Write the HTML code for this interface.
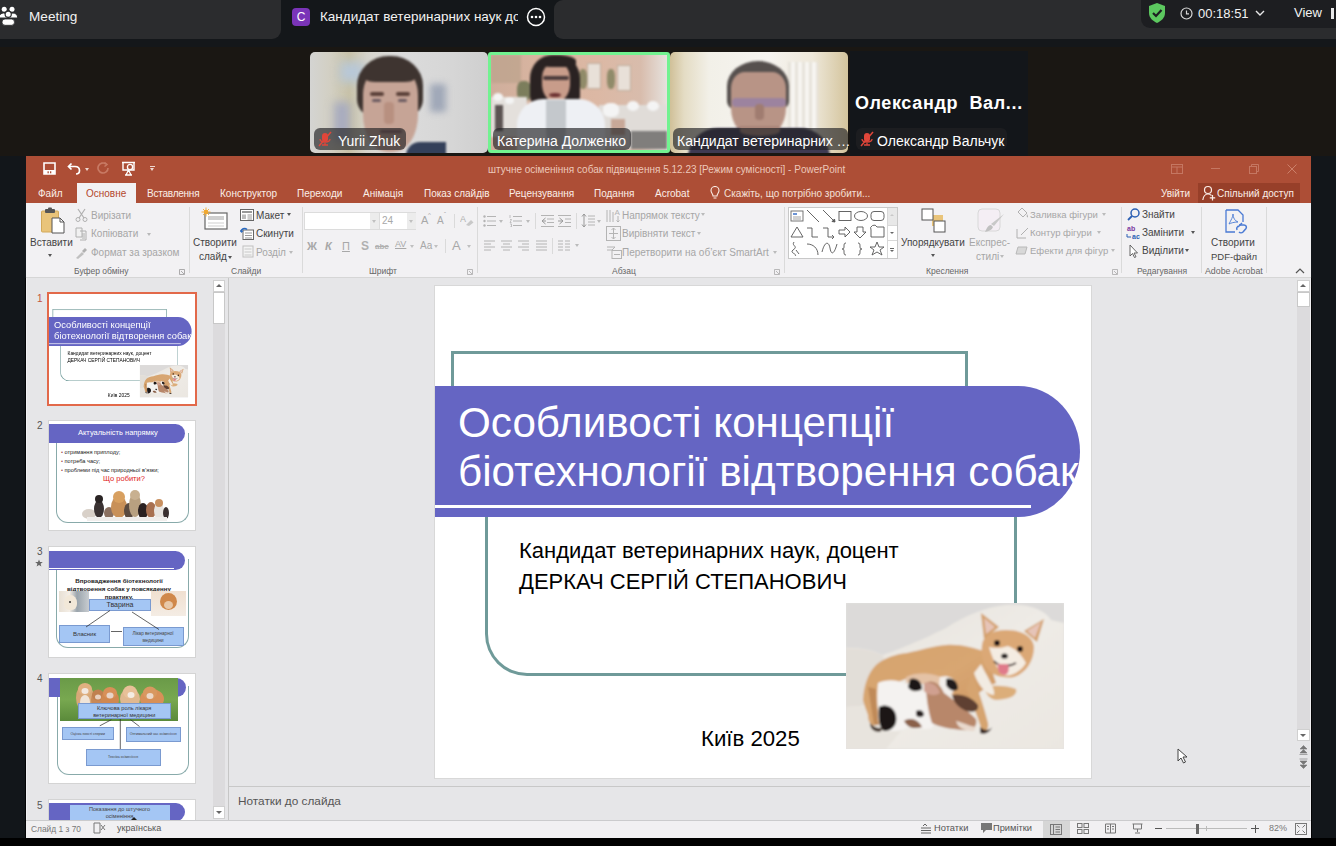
<!DOCTYPE html>
<html><head><meta charset="utf-8">
<style>
*{margin:0;padding:0;box-sizing:border-box}
html,body{width:1336px;height:846px;overflow:hidden;background:#000;font-family:"Liberation Sans",sans-serif;position:relative}
.a{position:absolute}
.t{position:absolute;white-space:nowrap;line-height:1}
/* ZOOM HEADER */
#topbar{left:0;top:0;width:1336px;height:47px;background:#14171a}
#tabMeeting{left:0;top:0;width:281px;height:39px;background:#2b2c2e;border-bottom-right-radius:9px}
#tabRight{left:554px;top:0;width:782px;height:39px;background:#2b2c2e;border-bottom-left-radius:9px;border-top-left-radius:9px}
#pill{left:1141px;top:0;width:195px;height:28px;background:#1d1e21;border-bottom-left-radius:9px}
#videostrip{left:0;top:47px;width:1336px;height:109px;background:#1a1713}
.tile{position:absolute;top:52px;height:101px;overflow:hidden;border-radius:5px}
.np{position:absolute;top:128px;height:22px;background:rgba(34,34,36,.66);border-radius:6px;color:#fff;font-size:14px;line-height:22px;white-space:nowrap}
#leftdark{left:0;top:156px;width:26px;height:682px;background:#12161a}
#rightdark{left:1311px;top:156px;width:25px;height:682px;background:#12161a}
/* PPT */
#ppt{left:26px;top:156px;width:1285px;height:682px;background:#e6e6e8;overflow:hidden}
</style></head><body>
<!-- ZOOM TOP -->
<div id="topbar" class="a"></div>
<div id="tabMeeting" class="a"></div>
<div id="tabRight" class="a"></div>
<div id="pill" class="a"></div>
<!-- people icon -->
<svg class="a" style="left:0;top:0" width="20" height="28" viewBox="0 0 20 28">
  <circle cx="4.2" cy="9.2" r="2.5" fill="#fff"/><circle cx="12" cy="9.2" r="2.5" fill="#fff"/>
  <path d="M-1.5 18 C-1 14.5 1.5 13 3.5 13 C6 13 8 14.5 8.5 18 Z" fill="#fff" stroke="#2b2c2e" stroke-width="1"/>
  <path d="M8 18 C8.5 14.5 10.5 13 13 13 C15.5 13 17.5 14.5 17.8 18 Z" fill="#fff" stroke="#2b2c2e" stroke-width="1"/>
  <circle cx="8.2" cy="14.2" r="3.1" fill="#fff" stroke="#2b2c2e" stroke-width="1.2"/>
  <rect x="2" y="19" width="12.5" height="6.3" rx="3.1" fill="#fff" stroke="#2b2c2e" stroke-width="0.8"/>
</svg>
<div class="t" style="left:29px;top:10px;font-size:13.6px;color:#f2f2f2">Meeting</div>
<div class="a" style="left:292px;top:8px;width:18px;height:18px;background:#7a34b8;border-radius:4px;color:#fff;font-size:12px;line-height:18px;text-align:center">C</div>
<div class="a" style="left:320px;top:9px;width:198px;height:18px;overflow:hidden"><div class="t" style="left:0;top:1px;font-size:13.5px;color:#f2f2f2">Кандидат ветеринарних наук доцент</div></div>
<svg class="a" style="left:526px;top:7px" width="20" height="20" viewBox="0 0 20 20"><circle cx="10" cy="10" r="8.5" fill="none" stroke="#fff" stroke-width="1.5"/><circle cx="6" cy="10" r="1.3" fill="#fff"/><circle cx="10" cy="10" r="1.3" fill="#fff"/><circle cx="14" cy="10" r="1.3" fill="#fff"/></svg>
<!-- shield -->
<svg class="a" style="left:1147px;top:2px" width="20" height="22" viewBox="0 0 20 22"><path d="M10 1 L18 4 L18 11 C18 16 14 19 10 21 C6 19 2 16 2 11 L2 4 Z" fill="#5cc85f"/><path d="M6 11 L9 14 L14.5 8" fill="none" stroke="#1d1e21" stroke-width="2.2"/></svg>
<svg class="a" style="left:1180px;top:7px" width="13" height="13" viewBox="0 0 13 13"><circle cx="6.5" cy="6.5" r="5.5" fill="none" stroke="#d8d8d8" stroke-width="1.2"/><path d="M6.5 3.5 V6.8 H9" fill="none" stroke="#d8d8d8" stroke-width="1.2"/></svg>
<div class="t" style="left:1198px;top:7px;font-size:13px;color:#f2f2f2">00:18:51</div>
<svg class="a" style="left:1255px;top:10px" width="10" height="7" viewBox="0 0 10 7"><path d="M1 1 L5 5 L9 1" fill="none" stroke="#e8e8e8" stroke-width="1.4"/></svg>
<div class="t" style="left:1294px;top:6px;font-size:13px;color:#f2f2f2">View</div>
<div class="a" style="left:1331px;top:8px;width:5px;height:11px;border-left:3px solid #e8e8e8"></div>

<div id="videostrip" class="a"></div>
<!-- tile 1 -->
<div class="tile" style="left:310px;width:178px;background:linear-gradient(90deg,#d4d4d2 0%,#d2cfc2 12%,#c8c2a8 22%,#d6d4cc 32%,#dcdcdc 50%,#d6d6d6 80%,#cfcfcf 100%)">
  <div class="a" style="left:0;top:0;width:178px;height:101px;filter:blur(1.2px)">
  <div class="a" style="left:24px;top:50px;width:16px;height:40px;background:#a8acc0;filter:blur(4px)"></div>
  <div class="a" style="left:30px;top:10px;width:24px;height:20px;background:#b8c8d8;filter:blur(5px)"></div>
  <div class="a" style="left:120px;top:32px;width:16px;height:28px;background:#a0a8b8;filter:blur(3px)"></div>
  <div class="a" style="left:47px;top:4px;width:66px;height:62px;background:#3e3430;border-radius:48% 48% 30% 30%"></div>
  <div class="a" style="left:53px;top:18px;width:55px;height:82px;background:#c6a496;border-radius:30% 30% 45% 45%"></div>
  <div class="a" style="left:56px;top:16px;width:48px;height:14px;background:#3e3430;border-radius:50% 50% 20% 20%"></div>
  <div class="a" style="left:60px;top:40px;width:14px;height:4px;background:#5a4038;border-radius:2px"></div>
  <div class="a" style="left:86px;top:40px;width:14px;height:4px;background:#5a4038;border-radius:2px"></div>
  <div class="a" style="left:62px;top:47px;width:9px;height:3px;background:#6a5a60;border-radius:2px"></div>
  <div class="a" style="left:88px;top:47px;width:9px;height:3px;background:#6a5a60;border-radius:2px"></div>
  <div class="a" style="left:74px;top:50px;width:10px;height:22px;background:#b89080;border-radius:4px"></div>
  <div class="a" style="left:70px;top:78px;width:22px;height:3px;background:#8a6060;border-radius:2px"></div>
  <div class="a" style="left:96px;top:90px;width:40px;height:14px;background:#34405a;border-radius:14px 0 0 0"></div>
  </div>
</div>
<div class="np" style="left:314px;width:92px"><svg class="a" style="left:3px;top:3px" width="16" height="16" viewBox="0 0 16 16"><rect x="5" y="2" width="6" height="9" rx="3" fill="#e0463a"/><path d="M3 8 C3 12 13 12 13 8 M8 12 V14 M5 14 H11" fill="none" stroke="#e0463a" stroke-width="1.3"/><path d="M2 15 L14 1" stroke="#e0463a" stroke-width="1.5"/></svg><span class="t" style="left:24px;top:6px">Yurii Zhuk</span></div>
<!-- tile 2 -->
<div class="tile" style="left:488px;width:182px;border-radius:3px;border:3px solid #72f290;background:linear-gradient(90deg,#cfae9c 0%,#d8b4a0 25%,#dcb8a4 60%,#d8bcac 85%,#e6e2de 100%)">
  <div class="a" style="left:0;top:0;width:176px;height:95px;filter:blur(1.2px)">
  <div class="a" style="left:0;top:0;width:30px;height:28px;background:#b8a088;opacity:.6"></div>
  <div class="a" style="left:126px;top:10px;width:14px;height:26px;background:#e8e0d8;border:1px solid #c0b0a0"></div>
  <div class="a" style="left:96px;top:8px;width:14px;height:26px;background:#e8e0d8;border:1px solid #c0b0a0"></div>
  <div class="a" style="left:88px;top:14px;width:8px;height:20px;background:#707850;opacity:.7;border-radius:40%"></div>
  <div class="a" style="left:116px;top:14px;width:8px;height:20px;background:#707850;opacity:.7;border-radius:40%"></div>
  <div class="a" style="left:26px;top:26px;width:14px;height:20px;background:#405a30;opacity:.6;border-radius:40%"></div>
  <div class="a" style="left:0;top:42px;width:36px;height:40px;background:#e4e0dc"></div>
  <div class="a" style="left:2px;top:38px;width:10px;height:8px;background:#f4f4f4;border-radius:50%"></div>
  <div class="a" style="left:14px;top:42px;width:9px;height:7px;background:#f4f4f4;border-radius:50%"></div>
  <div class="a" style="left:4px;top:50px;width:8px;height:26px;background:#3a3030;opacity:.8"></div>
  <div class="a" style="left:108px;top:50px;width:68px;height:44px;background:#e0dcd8"></div>
  <div class="a" style="left:112px;top:48px;width:16px;height:14px;background:#f4f4f4;border-radius:40%"></div>
  <div class="a" style="left:136px;top:46px;width:12px;height:10px;background:#f4f4f4;border-radius:50%"></div>
  <div class="a" style="left:156px;top:46px;width:12px;height:10px;background:#f4f4f4;border-radius:50%"></div>
  <div class="a" style="left:120px;top:64px;width:14px;height:16px;background:#c8a898"></div>
  <div class="a" style="left:140px;top:76px;width:36px;height:18px;background:#404040;opacity:.6"></div>
  <div class="a" style="left:39px;top:0;width:50px;height:52px;background:#2a2222;border-radius:45% 45% 20% 20%"></div>
  <div class="a" style="left:51px;top:9px;width:28px;height:38px;background:#c89c8a;border-radius:35% 35% 48% 48%"></div>
  <div class="a" style="left:49px;top:0;width:36px;height:12px;background:#2a2222;border-radius:50% 50% 30% 30%"></div>
  <div class="a" style="left:52px;top:21px;width:26px;height:4px;background:#4a3a3a;border-radius:2px"></div>
  <div class="a" style="left:58px;top:38px;width:12px;height:4px;background:#6a3030;border-radius:50%"></div>
  <div class="a" style="left:26px;top:44px;width:88px;height:52px;background:#eef0f4;border-radius:26px 26px 0 0"></div>
  <div class="a" style="left:55px;top:45px;width:20px;height:50px;background:#c4c8cc;border-radius:0 0 40% 40%"></div>
  </div>
</div>
<div class="np" style="left:493px;width:138px"><span class="t" style="left:4px;top:6px">Катерина Долженко</span></div>
<!-- tile 3 -->
<div class="tile" style="left:670px;width:178px;background:linear-gradient(90deg,#d0c098 0%,#e4dcc4 8%,#f2f0e8 22%,#f6f4f0 55%,#eee8da 80%,#d4c49c 100%)">
  <div class="a" style="left:0;top:0;width:178px;height:101px;filter:blur(1.2px)">
  <div class="a" style="left:118px;top:10px;width:30px;height:70px;background:repeating-linear-gradient(90deg,#e6e2da 0 3px,#f8f6f2 3px 7px)"></div>
  <div class="a" style="left:57px;top:9px;width:62px;height:50px;background:#56504e;border-radius:50% 50% 20% 20%"></div>
  <div class="a" style="left:61px;top:20px;width:55px;height:66px;background:#b89486;border-radius:25% 25% 45% 45%"></div>
  <div class="a" style="left:62px;top:46px;width:54px;height:9px;background:#8878b0;border-radius:4px;opacity:.6"></div>
  <div class="a" style="left:85px;top:52px;width:9px;height:16px;background:#a07c70;border-radius:4px"></div>
  <div class="a" style="left:76px;top:74px;width:24px;height:3px;background:#705050;border-radius:2px"></div>
  <div class="a" style="left:18px;top:76px;width:142px;height:30px;background:#3e3a52;border-radius:34px 34px 0 0"></div>
  <div class="a" style="left:70px;top:74px;width:40px;height:10px;background:#a88478;border-radius:0 0 50% 50%"></div>
  </div>
</div>
<div class="np" style="left:673px;width:175px"><span class="t" style="left:4px;top:6px">Кандидат ветеринарних …</span></div>
<!-- tile 4 -->
<div class="tile" style="left:850px;width:178px;top:51px;height:105px;background:#13161a;border-radius:0">
  <div class="t" style="left:5px;top:43px;font-size:18px;font-weight:bold;color:#fff;letter-spacing:0.65px">Олександр&nbsp; Вал...</div>
</div>
<div class="np" style="left:856px;width:151px"><svg class="a" style="left:3px;top:3px" width="16" height="16" viewBox="0 0 16 16"><rect x="5" y="2" width="6" height="9" rx="3" fill="#e0463a"/><path d="M3 8 C3 12 13 12 13 8 M8 12 V14 M5 14 H11" fill="none" stroke="#e0463a" stroke-width="1.3"/><path d="M2 15 L14 1" stroke="#e0463a" stroke-width="1.5"/></svg><span class="t" style="left:21px;top:6px">Олександр Вальчук</span></div>

<div id="leftdark" class="a"></div>
<div id="rightdark" class="a"></div>
<div id="ppt" class="a"></div>
<div class="a" style="left:26px;top:156px;width:1285px;height:47px;background:#ad4e36"></div>
<!-- QAT -->
<svg class="a" style="left:43px;top:162px" width="13" height="13" viewBox="0 0 13 13"><path d="M1 1 H12 V12 H1 Z" fill="none" stroke="#fff" stroke-width="1.6"/><rect x="1" y="8" width="11" height="4" fill="#fff"/><rect x="4.5" y="9.3" width="1.3" height="2" fill="#ad4e36"/><rect x="7" y="9.3" width="1.3" height="2" fill="#ad4e36"/></svg>
<svg class="a" style="left:67px;top:162px" width="14" height="13" viewBox="0 0 14 13"><path d="M4.5 1.5 L1.5 4.5 L4.5 7.5 M1.5 4.5 H8 C11 4.5 12.5 6.5 12.5 8.5 C12.5 10.5 11 12 9 12" fill="none" stroke="#fff" stroke-width="1.7"/></svg>
<div class="a" style="left:85px;top:168px;border-left:2.5px solid transparent;border-right:2.5px solid transparent;border-top:3px solid #f0d8d0"></div>
<svg class="a" style="left:97px;top:162px" width="13" height="13" viewBox="0 0 13 13"><path d="M9 2 A5 5 0 1 0 11 6" fill="none" stroke="#c87a64" stroke-width="1.7"/><path d="M7.5 0.5 L10 2.5 L7.5 4.5" fill="none" stroke="#c87a64" stroke-width="1.5"/></svg>
<svg class="a" style="left:121px;top:161px" width="15" height="15" viewBox="0 0 15 15"><path d="M1 1.5 H14 M2 1.5 V9 H13 V1.5" fill="none" stroke="#fff" stroke-width="1.4"/><circle cx="9" cy="6" r="2.6" fill="none" stroke="#fff" stroke-width="1.3"/><path d="M7.5 9 L5 14 M7.5 9 L10 14 M4 14 H11" fill="none" stroke="#fff" stroke-width="1.3"/></svg>
<div class="a" style="left:150px;top:166px;width:5px;height:1px;background:#f0d8d0"></div>
<div class="a" style="left:150px;top:168px;border-left:2.5px solid transparent;border-right:2.5px solid transparent;border-top:3px solid #f0d8d0"></div>
<div class="t" style="left:488px;top:165px;font-size:10px;color:#ecc8ba">штучне осіменіння собак підвищення 5.12.23 [Режим сумісності] - PowerPoint</div>
<!-- window controls -->
<svg class="a" style="left:1171px;top:164px" width="12" height="10" viewBox="0 0 12 10"><rect x="0.5" y="0.5" width="11" height="9" fill="none" stroke="#c57762" stroke-width="1"/><path d="M0.5 3 H11.5 M6 3 V9.5" stroke="#c57762" stroke-width="1"/></svg>
<div class="a" style="left:1211px;top:168px;width:9px;height:1px;background:#c57762"></div>
<svg class="a" style="left:1249px;top:164px" width="10" height="10" viewBox="0 0 10 10"><rect x="0.5" y="2.5" width="7" height="7" fill="none" stroke="#c57762"/><path d="M2.5 2.5 V0.5 H9.5 V7.5 H7.5" fill="none" stroke="#c57762"/></svg>
<svg class="a" style="left:1287px;top:164px" width="10" height="10" viewBox="0 0 10 10"><path d="M0.5 0.5 L9.5 9.5 M9.5 0.5 L0.5 9.5" stroke="#cc806a" stroke-width="1"/></svg>
<!-- tabs -->
<div class="a" style="left:77px;top:183px;width:59px;height:21px;background:#f2f1f3"></div>
<div class="t" style="left:38px;top:189px;font-size:10px;color:#fbeee8">Файл</div>
<div class="t" style="left:86px;top:189px;font-size:10px;color:#b4472c">Основне</div>
<div class="t" style="left:147px;top:189px;font-size:10px;letter-spacing:-0.23px;color:#fbeee8">Вставлення</div>
<div class="t" style="left:220px;top:189px;font-size:10px;color:#fbeee8">Конструктор</div>
<div class="t" style="left:297px;top:189px;font-size:10px;color:#fbeee8">Переходи</div>
<div class="t" style="left:363px;top:189px;font-size:10px;color:#fbeee8">Анімація</div>
<div class="t" style="left:424px;top:189px;font-size:10px;color:#fbeee8">Показ слайдів</div>
<div class="t" style="left:509px;top:189px;font-size:10px;color:#fbeee8">Рецензування</div>
<div class="t" style="left:594px;top:189px;font-size:10px;color:#fbeee8">Подання</div>
<div class="t" style="left:655px;top:189px;font-size:10px;color:#fbeee8">Acrobat</div>
<svg class="a" style="left:710px;top:186px" width="10" height="14" viewBox="0 0 10 14"><path d="M3 10 C3 8 1 7 1 4.5 A4 4 0 0 1 9 4.5 C9 7 7 8 7 10 Z M3.5 12 H6.5" fill="none" stroke="#fbeee8" stroke-width="1.1"/></svg>
<div class="t" style="left:724px;top:189px;font-size:10px;color:#f4e0d8">Скажіть, що потрібно зробити...</div>
<div class="t" style="left:1161px;top:189px;font-size:10px;color:#fbeee8">Увійти</div>
<div class="a" style="left:1198px;top:183px;width:102px;height:20px;background:#973f29"></div>
<svg class="a" style="left:1202px;top:185px" width="14" height="16" viewBox="0 0 14 16"><circle cx="6" cy="5" r="3.5" fill="none" stroke="#fbeee8" stroke-width="1.2"/><path d="M0.8 15 C1.5 10.5 4 9 6 9 C7.5 9 8.5 9.5 9.5 10.5" fill="none" stroke="#fbeee8" stroke-width="1.2"/><path d="M10.5 10 V15.5 M7.8 12.8 H13.2" stroke="#fbeee8" stroke-width="1.2"/></svg>
<div class="t" style="left:1217px;top:189px;font-size:10px;color:#fbeee8">Спільний доступ</div>
<!-- ribbon -->
<div class="a" style="left:26px;top:203px;width:1285px;height:74px;background:#f2f1f3"></div>
<div class="a" style="left:26px;top:277px;width:1285px;height:1px;background:#d6d6d6"></div>
<!-- ribbon content -->
<div class="a" style="left:26px;top:203px;width:1285px;height:74px;font-size:10px;color:#444"></div>
<!-- clipboard -->
<svg class="a" style="left:40px;top:207px" width="26" height="27" viewBox="0 0 26 27"><rect x="1.5" y="4" width="17" height="21" rx="1" fill="#e9c47a" stroke="#d2a95a" stroke-width="1"/><rect x="5" y="2" width="10" height="4" rx="1" fill="#555"/><rect x="8" y="0.5" width="4" height="3" rx="1" fill="#555"/><path d="M12 11 H20 L24 15 V26 H12 Z" fill="#fff" stroke="#555" stroke-width="1"/><path d="M20 11 V15 H24" fill="none" stroke="#555" stroke-width="1"/></svg>
<div class="t" style="left:30px;top:238px;font-size:10px;color:#444">Вставити</div>
<div class="a" style="left:48px;top:254px;border-left:2.5px solid transparent;border-right:2.5px solid transparent;border-top:3px solid #555"></div>
<svg class="a" style="left:75px;top:208px" width="13" height="14" viewBox="0 0 13 14"><path d="M3 1 L9 10 M10 1 L4 10" stroke="#b0b0b0" stroke-width="1.2" fill="none"/><circle cx="3" cy="11.5" r="2" fill="none" stroke="#b0b0b0"/><circle cx="10" cy="11.5" r="2" fill="none" stroke="#b0b0b0"/></svg>
<div class="t" style="left:91px;top:211px;font-size:10px;color:#a6a6a6">Вирізати</div>
<svg class="a" style="left:75px;top:227px" width="13" height="14" viewBox="0 0 13 14"><path d="M1 1 H7 V10 H1 Z M5 4 H11 V13 H5" fill="#f1f1f1" stroke="#b0b0b0" stroke-width="1"/><path d="M7 7 H10 M7 9 H10 M7 11 H10" stroke="#b0b0b0"/></svg>
<div class="t" style="left:91px;top:229px;font-size:10px;color:#a6a6a6">Копіювати</div>
<div class="a" style="left:147px;top:233px;border-left:2.5px solid transparent;border-right:2.5px solid transparent;border-top:3px solid #b8b8b8"></div>
<svg class="a" style="left:75px;top:246px" width="13" height="13" viewBox="0 0 13 13"><path d="M1 12 L7 6 L9 8 L3 13 Z" fill="#c0c0c0"/><path d="M7 5 L10 2 L12 4 L9 7 Z" fill="#b0b0b0"/></svg>
<div class="t" style="left:91px;top:248px;font-size:10px;color:#a6a6a6">Формат за зразком</div>
<div class="t" style="left:74px;top:267px;font-size:8.5px;color:#666">Буфер обміну</div>
<svg class="a" style="left:179px;top:269px" width="6" height="6" viewBox="0 0 6 6"><path d="M0.5 0.5 H5.5 V5.5 H0.5 Z" fill="none" stroke="#999" stroke-width=".8"/><path d="M2 2 L5 5" stroke="#999" stroke-width=".8"/></svg>
<div class="a" style="left:189px;top:207px;width:1px;height:66px;background:#dadada"></div>
<!-- slides group -->
<svg class="a" style="left:201px;top:207px" width="28" height="24" viewBox="0 0 28 24"><rect x="4" y="6" width="22" height="16" fill="#fff" stroke="#666" stroke-width="1.2"/><rect x="7" y="9" width="16" height="4" fill="#cfcfcf"/><path d="M7 16 H23 M7 19 H23" stroke="#cfcfcf" stroke-width="1.2"/><circle cx="5" cy="5" r="2.2" fill="#f0a830"/><path d="M5 0.5 V9.5 M0.5 5 H9.5 M2 2 L8 8 M8 2 L2 8" stroke="#f0a830" stroke-width=".9"/></svg>
<div class="t" style="left:193px;top:238px;font-size:10px;color:#444">Створити</div>
<div class="t" style="left:199px;top:252px;font-size:10px;color:#444">слайд</div>
<div class="a" style="left:228px;top:256px;border-left:2.5px solid transparent;border-right:2.5px solid transparent;border-top:3px solid #555"></div>
<div class="t" style="left:231px;top:267px;font-size:8.5px;color:#666">Слайди</div>
<svg class="a" style="left:240px;top:209px" width="14" height="12" viewBox="0 0 14 12"><rect x="0.5" y="0.5" width="13" height="11" fill="#fff" stroke="#666"/><rect x="2" y="2" width="10" height="2" fill="#999"/><rect x="2" y="5.5" width="4" height="4.5" fill="#bbb"/><path d="M7.5 6 H12 M7.5 8 H12 M7.5 10 H12" stroke="#999"/></svg>
<div class="t" style="left:256px;top:211px;font-size:10px;color:#444">Макет</div>
<div class="a" style="left:287px;top:213px;border-left:2.5px solid transparent;border-right:2.5px solid transparent;border-top:3px solid #555"></div>
<svg class="a" style="left:240px;top:227px" width="14" height="13" viewBox="0 0 14 13"><rect x="3" y="3" width="10.5" height="9.5" fill="#fff" stroke="#666"/><path d="M5 6 H12 M5 8.5 H12 M5 11 H12" stroke="#999"/><path d="M1 5 A3.5 3.5 0 0 1 7 2.5" fill="none" stroke="#2a6ac0" stroke-width="1.5"/><path d="M0 3 L1.2 6 L3.5 4" fill="#2a6ac0"/></svg>
<div class="t" style="left:256px;top:229px;font-size:10px;color:#444">Скинути</div>
<svg class="a" style="left:240px;top:245px" width="14" height="13" viewBox="0 0 14 13"><rect x="3" y="1" width="10" height="11" fill="#f4f4f4" stroke="#c0c0c0"/><path d="M4.5 4 H11.5 M4.5 7 H11.5 M4.5 10 H11.5" stroke="#c8c8c8"/></svg>
<div class="t" style="left:256px;top:248px;font-size:10px;color:#a6a6a6">Розділ</div>
<div class="a" style="left:289px;top:251px;border-left:2.5px solid transparent;border-right:2.5px solid transparent;border-top:3px solid #bbb"></div>
<div class="a" style="left:302px;top:207px;width:1px;height:66px;background:#dadada"></div>
<!-- font group -->
<div class="a" style="left:304px;top:212px;width:75px;height:18px;background:#fff;border:1px solid #dcdcdc"></div>
<div class="a" style="left:370px;top:213px;width:9px;height:16px;background:#ececec"></div>
<div class="a" style="left:372px;top:220px;border-left:2.5px solid transparent;border-right:2.5px solid transparent;border-top:3px solid #c0c0c0"></div>
<div class="a" style="left:379px;top:212px;width:37px;height:18px;background:#fff;border:1px solid #dcdcdc"></div>
<div class="a" style="left:407px;top:213px;width:9px;height:16px;background:#ececec"></div>
<div class="a" style="left:409px;top:220px;border-left:2.5px solid transparent;border-right:2.5px solid transparent;border-top:3px solid #c0c0c0"></div>
<div class="t" style="left:382px;top:216px;font-size:10px;color:#a8a8a8">24</div>
<div class="t" style="left:421px;top:215px;font-size:11px;color:#a8a8a8">A</div>
<div class="t" style="left:428px;top:212px;font-size:6px;color:#a8a8a8">^</div>
<div class="t" style="left:437px;top:216px;font-size:10px;color:#a8a8a8">A</div>
<div class="t" style="left:444px;top:211px;font-size:6px;color:#a8a8a8">ˇ</div>
<div class="a" style="left:454px;top:214px;width:1px;height:14px;background:#dadada"></div>
<svg class="a" style="left:460px;top:213px" width="14" height="14" viewBox="0 0 14 14"><text x="0" y="9" font-size="9" fill="#b0b0b0" font-family="Liberation Sans">A</text><path d="M6 12 L11 7 L13.5 9.5 L9 13 Z" fill="#c8c8c8"/></svg>
<div class="a" style="left:477px;top:207px;width:1px;height:66px;background:#dadada"></div>
<div class="t" style="left:307px;top:241px;font-size:11px;font-weight:bold;color:#a8a8a8">Ж</div>
<div class="t" style="left:325px;top:241px;font-size:11px;font-weight:bold;font-style:italic;color:#a8a8a8">К</div>
<div class="t" style="left:342px;top:241px;font-size:11px;color:#a8a8a8;text-decoration:underline">П</div>
<div class="t" style="left:361px;top:240px;font-size:12px;font-weight:bold;color:#b0b0b0">S</div>
<div class="t" style="left:375px;top:243px;font-size:8px;font-weight:bold;color:#b0b0b0;text-decoration:line-through">abc</div>
<div class="t" style="left:395px;top:240px;font-size:9px;color:#a8a8a8;text-decoration:underline">AV</div>
<div class="a" style="left:410px;top:245px;border-left:2.5px solid transparent;border-right:2.5px solid transparent;border-top:3px solid #c0c0c0"></div>
<div class="t" style="left:420px;top:241px;font-size:10px;color:#a8a8a8">Aa</div>
<div class="a" style="left:434px;top:245px;border-left:2.5px solid transparent;border-right:2.5px solid transparent;border-top:3px solid #c0c0c0"></div>
<div class="a" style="left:445px;top:239px;width:1px;height:14px;background:#dadada"></div>
<div class="t" style="left:452px;top:239px;font-size:13px;color:#a8a8a8">A</div>
<div class="a" style="left:467px;top:245px;border-left:2.5px solid transparent;border-right:2.5px solid transparent;border-top:3px solid #c0c0c0"></div>
<div class="t" style="left:369px;top:267px;font-size:8.5px;color:#666">Шрифт</div>
<svg class="a" style="left:467px;top:269px" width="6" height="6" viewBox="0 0 6 6"><path d="M0.5 0.5 H5.5 V5.5 H0.5 Z" fill="none" stroke="#aaa" stroke-width=".8"/><path d="M2 2 L5 5" stroke="#aaa" stroke-width=".8"/></svg>
<!-- paragraph -->
<svg class="a" style="left:483px;top:215px" width="13" height="12" viewBox="0 0 13 12"><circle cx="1.5" cy="1.5" r="1.2" fill="#b4b4b4"/><circle cx="1.5" cy="6" r="1.2" fill="#b4b4b4"/><circle cx="1.5" cy="10.5" r="1.2" fill="#b4b4b4"/><path d="M4 1.5 H13 M4 6 H13 M4 10.5 H13" stroke="#b4b4b4"/></svg>
<div class="a" style="left:499px;top:220px;border-left:2.5px solid transparent;border-right:2.5px solid transparent;border-top:3px solid #bbb"></div>
<svg class="a" style="left:509px;top:215px" width="13" height="12" viewBox="0 0 13 12"><path d="M1 0 V3 M1 4.5 H2.5 L1 7.5 H2.5 M1 9 H2.5 V12 H1" stroke="#b4b4b4" stroke-width=".8" fill="none"/><path d="M4 1.5 H13 M4 6 H13 M4 10.5 H13" stroke="#b4b4b4"/></svg>
<div class="a" style="left:526px;top:220px;border-left:2.5px solid transparent;border-right:2.5px solid transparent;border-top:3px solid #bbb"></div>
<div class="a" style="left:535px;top:213px;width:1px;height:16px;background:#dadada"></div>
<svg class="a" style="left:541px;top:215px" width="13" height="12" viewBox="0 0 13 12"><path d="M0 0.5 H13 M6 4 H13 M6 7.5 H13 M0 11.5 H13" stroke="#b4b4b4"/><path d="M4.5 3 L1 6 L4.5 9 M1 6 H5" stroke="#999" fill="none"/></svg>
<svg class="a" style="left:558px;top:215px" width="13" height="12" viewBox="0 0 13 12"><path d="M0 0.5 H13 M7 4 H13 M7 7.5 H13 M0 11.5 H13" stroke="#b4b4b4"/><path d="M1.5 3 L5 6 L1.5 9 M0 6 H5" stroke="#999" fill="none"/></svg>
<div class="a" style="left:576px;top:213px;width:1px;height:16px;background:#dadada"></div>
<svg class="a" style="left:581px;top:213px" width="14" height="15" viewBox="0 0 14 15"><path d="M3 1 V14 M1 3.5 L3 1 L5 3.5 M1 11.5 L3 14 L5 11.5" stroke="#999" fill="none"/><path d="M7 3 H14 M7 6 H14 M7 9 H14 M7 12 H14" stroke="#b4b4b4"/></svg>
<div class="a" style="left:597px;top:220px;border-left:2.5px solid transparent;border-right:2.5px solid transparent;border-top:3px solid #bbb"></div>
<svg class="a" style="left:484px;top:240px" width="11" height="11" viewBox="0 0 11 11"><path d="M0 1 H11 M0 4 H7 M0 7 H11 M0 10 H7" stroke="#b4b4b4"/></svg>
<svg class="a" style="left:501px;top:240px" width="11" height="11" viewBox="0 0 11 11"><path d="M0 1 H11 M2 4 H9 M0 7 H11 M2 10 H9" stroke="#b4b4b4"/></svg>
<svg class="a" style="left:518px;top:240px" width="11" height="11" viewBox="0 0 11 11"><path d="M0 1 H11 M4 4 H11 M0 7 H11 M4 10 H11" stroke="#b4b4b4"/></svg>
<svg class="a" style="left:536px;top:240px" width="11" height="11" viewBox="0 0 11 11"><path d="M0 1 H11 M0 4 H11 M0 7 H11 M0 10 H11" stroke="#b4b4b4"/></svg>
<div class="a" style="left:552px;top:238px;width:1px;height:16px;background:#dadada"></div>
<svg class="a" style="left:558px;top:240px" width="12" height="11" viewBox="0 0 12 11"><path d="M0 1 H5 M7 1 H12 M0 4 H5 M7 4 H12 M0 7 H5 M7 7 H12 M0 10 H5 M7 10 H12" stroke="#b4b4b4"/></svg>
<div class="a" style="left:575px;top:244px;border-left:2.5px solid transparent;border-right:2.5px solid transparent;border-top:3px solid #bbb"></div>
<svg class="a" style="left:606px;top:207px" width="15" height="16" viewBox="0 0 15 16"><path d="M1 3 V15 M4 3 V15 M7 5 V15" stroke="#b4b4b4"/><text x="8.5" y="8" font-size="8" fill="#b4b4b4" font-family="Liberation Sans">A</text><path d="M12 9 V15 M10.5 13.5 L12 15 L13.5 13.5" stroke="#b4b4b4" fill="none"/></svg>
<div class="t" style="left:622px;top:211px;font-size:10px;color:#a6a6a6">Напрямок тексту</div>
<div class="a" style="left:701px;top:213px;border-left:2.5px solid transparent;border-right:2.5px solid transparent;border-top:3px solid #bbb"></div>
<svg class="a" style="left:606px;top:226px" width="15" height="15" viewBox="0 0 15 15"><rect x="0.5" y="0.5" width="14" height="14" fill="none" stroke="#b4b4b4"/><path d="M7.5 2 V13 M5.5 4 L7.5 2 L9.5 4 M5.5 11 L7.5 13 L9.5 11 M3 7.5 H12" stroke="#b4b4b4" fill="none"/></svg>
<div class="t" style="left:622px;top:229px;font-size:10px;color:#a6a6a6">Вирівняти текст</div>
<div class="a" style="left:697px;top:232px;border-left:2.5px solid transparent;border-right:2.5px solid transparent;border-top:3px solid #bbb"></div>
<svg class="a" style="left:606px;top:245px" width="16" height="14" viewBox="0 0 16 14"><path d="M1 2 H9 L6 5 H1" fill="none" stroke="#b4b4b4"/><rect x="6" y="5.5" width="9.5" height="8" fill="none" stroke="#b4b4b4"/><path d="M8 9.5 H14" stroke="#b4b4b4"/></svg>
<div class="t" style="left:622px;top:248px;font-size:10px;color:#a6a6a6">Перетворити на об’єкт SmartArt</div>
<div class="a" style="left:773px;top:251px;border-left:2.5px solid transparent;border-right:2.5px solid transparent;border-top:3px solid #bbb"></div>
<div class="t" style="left:612px;top:267px;font-size:8.5px;color:#666">Абзац</div>
<svg class="a" style="left:774px;top:269px" width="6" height="6" viewBox="0 0 6 6"><path d="M0.5 0.5 H5.5 V5.5 H0.5 Z" fill="none" stroke="#aaa" stroke-width=".8"/><path d="M2 2 L5 5" stroke="#aaa" stroke-width=".8"/></svg>
<div class="a" style="left:784px;top:207px;width:1px;height:66px;background:#dadada"></div>
<div class="a" style="left:788px;top:207px;width:110px;height:52px;background:#fff;border:1px solid #c8c8c8"></div>
<div class="a" style="left:887px;top:208px;width:10px;height:17px;background:#e8e8e8;border-left:1px solid #d8d8d8"></div>
<div class="a" style="left:887px;top:225px;width:10px;height:16px;border-left:1px solid #d8d8d8;border-top:1px solid #d8d8d8;border-bottom:1px solid #d8d8d8"></div>
<div class="a" style="left:887px;top:241px;width:10px;height:17px;border-left:1px solid #d8d8d8"></div>
<div class="a" style="left:890px;top:214px;border-left:2px solid transparent;border-right:2px solid transparent;border-bottom:2.5px solid #c8c8c8"></div>
<div class="a" style="left:890px;top:232px;border-left:2px solid transparent;border-right:2px solid transparent;border-top:2.5px solid #666"></div>
<div class="a" style="left:890px;top:248px;width:4px;height:1px;background:#666"></div>
<div class="a" style="left:890px;top:250px;border-left:2px solid transparent;border-right:2px solid transparent;border-top:2.5px solid #666"></div>
<svg class="a" style="left:789px;top:208px" width="98" height="50" viewBox="0 0 98 50" fill="none" stroke="#555" stroke-width=".9">
<rect x="2" y="3" width="12" height="10" stroke="#666"/><path d="M4 9 H12 M4 11 H12" stroke="#999"/><path d="M4 6 H8" stroke="#3a70c8" stroke-width="1.5"/>
<path d="M18 2 L30 14"/><path d="M34 2 L46 14"/><path d="M46 14 L43 13.5 L45.5 11 Z" fill="#555"/>
<rect x="50" y="3.5" width="12" height="9"/><ellipse cx="72" cy="8" rx="6.5" ry="4.5"/><rect x="82" y="3.5" width="13" height="9" rx="3"/>
<path d="M8 19 L14 29 L2 29 Z"/><path d="M18 20 H23 V29 H29"/><path d="M34 20 H39 V29 H44 M43 27 L45 29 L43 31"/>
<path d="M50 22 H56 V19 L61 24 L56 29 V26 H50 Z"/><path d="M68 19 H74 V24 H77 L71 30 L65 24 H68 Z"/><path d="M82 22 A3 3 0 0 1 88 19 H95 V29 H82 Z"/>
<path d="M5 34 C2 38 10 38 4 42 C0 45 9 46 6 48 M7 42 L10 46"/><path d="M18 36 C24 36 29 40 29 47"/><path d="M33 44 C36 32 40 34 41 40 C42 47 45 47 48 36"/>
<path d="M57 35 C55 35 55 36 55 39 C55 41 54 41 53 41 C54 41 55 41 55 43 C55 46 55 47 57 47"/><path d="M69 35 C71 35 71 36 71 39 C71 41 72 41 73 41 C72 41 71 41 71 43 C71 46 71 47 69 47"/>
<path d="M88 34 L90 39 L95 39 L91 42 L93 47 L88 44 L83 47 L85 42 L81 39 L86 39 Z"/>
</svg>
<svg class="a" style="left:921px;top:208px" width="26" height="26" viewBox="0 0 26 26"><rect x="11" y="7" width="11" height="11" fill="#e9c47a"/><rect x="1" y="1" width="11" height="11" fill="#fff" stroke="#555"/><rect x="13" y="13" width="11" height="11" fill="#fff" stroke="#555"/></svg>
<div class="t" style="left:901px;top:238px;font-size:10px;color:#444">Упорядкувати</div>
<div class="a" style="left:931px;top:254px;border-left:2.5px solid transparent;border-right:2.5px solid transparent;border-top:3px solid #555"></div>
<svg class="a" style="left:977px;top:208px" width="28" height="27" viewBox="0 0 28 27"><rect x="1" y="1" width="22" height="22" rx="4" fill="#f4eef4" stroke="#d8d8d8"/><path d="M27 6 L17 18 L14 16 Z" fill="#c8c8c8"/><path d="M14 17 C11 17 10 20 8 24 C12 23 15 22 16 19 Z" fill="#c0c0c0"/></svg>
<div class="t" style="left:969px;top:238px;font-size:10px;color:#a6a6a6">Експрес-</div>
<div class="t" style="left:976px;top:252px;font-size:10px;color:#a6a6a6">стилі</div>
<div class="a" style="left:1000px;top:255px;border-left:2.5px solid transparent;border-right:2.5px solid transparent;border-top:3px solid #bbb"></div>
<svg class="a" style="left:1016px;top:207px" width="13" height="14" viewBox="0 0 13 14"><path d="M2 5 L6 1 L11 6 L7 10 Z" fill="none" stroke="#b0b0b0"/><path d="M11 7 C12 9 12.5 10 11.5 10.5 C10.5 10 10.5 9 11 7" fill="#b0b0b0"/></svg>
<div class="t" style="left:1030px;top:210px;font-size:9.5px;color:#a6a6a6">Заливка фігури</div>
<div class="a" style="left:1102px;top:213px;border-left:2.5px solid transparent;border-right:2.5px solid transparent;border-top:3px solid #bbb"></div>
<svg class="a" style="left:1016px;top:226px" width="13" height="13" viewBox="0 0 13 13"><path d="M1 3 V12 H10 M5 9 L12 2" fill="none" stroke="#b0b0b0"/></svg>
<div class="t" style="left:1030px;top:228px;font-size:9.5px;color:#a6a6a6">Контур фігури</div>
<div class="a" style="left:1097px;top:231px;border-left:2.5px solid transparent;border-right:2.5px solid transparent;border-top:3px solid #bbb"></div>
<svg class="a" style="left:1015px;top:244px" width="14" height="13" viewBox="0 0 14 13"><path d="M3 3 H12 L10 10 H1 Z" fill="#d8d8d8" stroke="#b8b8b8"/></svg>
<div class="t" style="left:1030px;top:246px;font-size:9.5px;color:#a6a6a6">Ефекти для фігур</div>
<div class="a" style="left:1111px;top:249px;border-left:2.5px solid transparent;border-right:2.5px solid transparent;border-top:3px solid #bbb"></div>
<div class="t" style="left:926px;top:267px;font-size:8.5px;color:#666">Креслення</div>
<svg class="a" style="left:1112px;top:269px" width="6" height="6" viewBox="0 0 6 6"><path d="M0.5 0.5 H5.5 V5.5 H0.5 Z" fill="none" stroke="#aaa" stroke-width=".8"/><path d="M2 2 L5 5" stroke="#aaa" stroke-width=".8"/></svg>
<div class="a" style="left:1121px;top:207px;width:1px;height:66px;background:#dadada"></div>
<svg class="a" style="left:1127px;top:208px" width="13" height="13" viewBox="0 0 13 13"><circle cx="8" cy="5" r="4" fill="none" stroke="#2b5fb4" stroke-width="1.5"/><path d="M5 8 L1 12" stroke="#2b5fb4" stroke-width="1.8"/></svg>
<div class="t" style="left:1142px;top:210px;font-size:10px;color:#444">Знайти</div>
<svg class="a" style="left:1126px;top:225px" width="15" height="15" viewBox="0 0 15 15"><text x="1" y="6" font-size="7" fill="#7a3aa0" font-family="Liberation Sans" font-weight="bold">ab</text><text x="6" y="14" font-size="7" fill="#2b5fb4" font-family="Liberation Sans" font-weight="bold">ac</text><path d="M1 9 V12 H5" stroke="#2b5fb4" fill="none"/></svg>
<div class="t" style="left:1142px;top:228px;font-size:10px;color:#444">Замінити</div>
<div class="a" style="left:1191px;top:231px;border-left:2.5px solid transparent;border-right:2.5px solid transparent;border-top:3px solid #555"></div>
<svg class="a" style="left:1129px;top:244px" width="10" height="14" viewBox="0 0 10 14"><path d="M1 1 V12 L3.5 9.5 L5.5 13.5 L7 12.8 L5 9 H8.5 Z" fill="#fff" stroke="#555" stroke-width=".9"/></svg>
<div class="t" style="left:1142px;top:246px;font-size:10px;color:#444">Виділити</div>
<div class="a" style="left:1185px;top:249px;border-left:2.5px solid transparent;border-right:2.5px solid transparent;border-top:3px solid #555"></div>
<div class="t" style="left:1137px;top:267px;font-size:8.5px;color:#666">Редагування</div>
<div class="a" style="left:1201px;top:207px;width:1px;height:66px;background:#dadada"></div>
<svg class="a" style="left:1224px;top:209px" width="25" height="26" viewBox="0 0 25 26"><path d="M2 1 H14 L19 6 V13 M2 1 V23 H11" fill="none" stroke="#4a7ad4" stroke-width="1.3"/><path d="M5 15 C7 11 9 8 9 5 C9 9 11 12 14 13 C10 13 7 14 5 15" fill="none" stroke="#4a7ad4" stroke-width=".9"/><path d="M15 16 L20 16 C22 16 23 18 22 19.5 L19 23 C18 24 16 24 15 23" fill="none" stroke="#4a7ad4" stroke-width="1.5"/><path d="M14 18 L18 14 M13 21 C12 19 13 18 14 17" fill="none" stroke="#4a7ad4" stroke-width="1.5"/></svg>
<div class="t" style="left:1211px;top:238px;font-size:10px;color:#444">Створити</div>
<div class="t" style="left:1211px;top:252px;font-size:9.5px;color:#444">PDF-файл</div>
<div class="t" style="left:1205px;top:267px;font-size:8.8px;color:#666">Adobe Acrobat</div>
<div class="a" style="left:1266px;top:207px;width:1px;height:66px;background:#dadada"></div>
<svg class="a" style="left:1295px;top:268px" width="10" height="6" viewBox="0 0 10 6"><path d="M1 5 L5 1 L9 5" fill="none" stroke="#555" stroke-width="1.2"/></svg>
<!-- LEFT PANE -->
<div class="a" style="left:213px;top:280px;width:12px;height:539px;background:#dcdbdd"></div>
<div class="a" style="left:213px;top:280px;width:12px;height:12px;background:#fff;border:1px solid #d0d0d0"></div>
<div class="a" style="left:216px;top:284px;border-left:3px solid transparent;border-right:3px solid transparent;border-bottom:3.5px solid #666"></div>
<div class="a" style="left:213px;top:292px;width:12px;height:32px;background:#fff;border:1px solid #c8c8c8"></div>
<div class="a" style="left:213px;top:806px;width:12px;height:13px;background:#fff;border:1px solid #d0d0d0"></div>
<div class="a" style="left:216px;top:811px;border-left:3px solid transparent;border-right:3px solid transparent;border-top:3.5px solid #666"></div>
<div class="a" style="left:228px;top:278px;width:1px;height:542px;background:#c6c6c6"></div>
<div class="t" style="left:37px;top:294px;font-size:10px;color:#c4573c">1</div>
<div class="t" style="left:37px;top:421px;font-size:10px;color:#555">2</div>
<div class="t" style="left:37px;top:547px;font-size:10px;color:#555">3</div>
<svg class="a" style="left:35px;top:559px" width="8" height="8" viewBox="0 0 10 10"><path d="M5 0.5 L6.3 3.8 L9.8 3.9 L7 6 L8 9.5 L5 7.5 L2 9.5 L3 6 L0.2 3.9 L3.7 3.8 Z" fill="#666"/></svg>
<div class="t" style="left:37px;top:674px;font-size:10px;color:#555">4</div>
<div class="t" style="left:37px;top:801px;font-size:10px;color:#555">5</div>
<!-- thumb1 -->
<div class="a" style="left:47px;top:292px;width:150px;height:114px;border:2px solid #e2694a;background:#fff;overflow:hidden">
<div class="a" style="left:0;top:0.5px;width:656px;height:492px;transform:scale(0.2211);transform-origin:0 0">
  <div class="a" style="left:16px;top:65px;width:517px;height:60px;border:3px solid #6f9a99;border-bottom:none"></div>
  <div class="a" style="left:50px;top:220px;width:532px;height:170px;border:3px solid #6f9a99;border-top:none;border-bottom-left-radius:42px"></div>
  <div class="a" style="left:0;top:100px;width:645px;height:131px;background:#6565c3;border-radius:0 62px 62px 0 / 0 66px 66px 0"></div>
  <div class="a" style="left:0;top:219px;width:596px;height:3px;background:#fff"></div>
  <div class="t" style="left:23px;top:112px;font-size:42.2px;line-height:49.3px;color:#fff">Особливості концепції<br>біотехнології відтворення собак</div>
  <div class="t" style="left:84px;top:249px;font-size:22px;line-height:31.1px;color:#000">Кандидат ветеринарних наук, доцент<br>ДЕРКАЧ СЕРГІЙ СТЕПАНОВИЧ</div>
  <div class="t" style="left:266px;top:442px;font-size:22.2px;color:#000">Київ 2025</div>
  <div  class="a" style="left:411px;top:317px;width:218px;height:146px;background:#e4e2e0;overflow:hidden"><svg width="218" height="146" viewBox="0 0 218 146">
<defs><filter id="bl3" x="-5%" y="-5%" width="110%" height="110%"><feGaussianBlur stdDeviation="0.9"/></filter>
<linearGradient id="blk3" x1="0" y1="0" x2="1" y2="1"><stop offset="0" stop-color="#e6e2dc"/><stop offset=".5" stop-color="#eeebe6"/><stop offset="1" stop-color="#ebe7e1"/></linearGradient>
<linearGradient id="fur3" x1="0" y1="0" x2="1" y2="1"><stop offset="0" stop-color="#d6a46e"/><stop offset=".5" stop-color="#d8a672"/><stop offset="1" stop-color="#cc9460"/></linearGradient>
</defs>
<g filter="url(#bl3)">
<rect width="218" height="146" fill="#dcdad9"/>
<path d="M0 45 C12 44 28 47 36 52 C50 48 80 35 100 25 C120 12 140 4 160 2 C185 0 200 8 205 17 L218 20 L218 146 L0 146 Z" fill="url(#blk3)"/>
<path d="M0 46 C15 45 30 48 38 54 L24 100 C15 104 5 105 0 104 Z" fill="#e2ded8"/>
<path d="M0 104 C20 100 40 110 60 122 L40 146 L0 146 Z" fill="#e8e4de"/>
<path d="M17 97 C18 82 22 70 30 62 C38 55 50 51 61 50 C75 47 87 43 100 42 C115 41 128 45 140 49 L150 80 C140 84 132 90 126 96 L100 90 C85 78 75 72 66 74 C50 78 40 86 34 100 L30 122 C26 124 22 120 22 112 C20 106 18 102 17 97 Z" fill="url(#fur3)"/>
<path d="M60 74 C72 68 90 70 104 78 L100 90 C88 84 74 78 60 80 Z" fill="#e4c2a6"/>
<path d="M22 84 C24 96 26 110 28 122 L33 122 C31 108 30 96 30 86 Z" fill="#c08a58"/>
<path d="M126 70 C132 86 138 104 142 120 C143 126 140 129 136 128 C132 114 126 100 120 86 Z" fill="#d6a470"/>
<path d="M138 84 C148 82 160 82 170 86 C172 92 165 96 150 97 C144 96 140 92 138 84 Z" fill="#dcae7a"/>
<path d="M135 61 C140 72 150 86 148 92 C140 92 132 82 128 70 Z" fill="#f2ebe2"/>
<path d="M136 42 C137 33 146 27 160 27 C176 27 187 33 188 44 C188 58 180 70 168 74 C156 76 145 72 140 64 C136 58 135 50 136 42 Z" fill="#dba876"/>
<path d="M143 44 C146 54 150 64 156 72 C164 74 174 70 180 60 C176 52 170 46 162 43 C156 45 150 46 143 44 Z" fill="#f4ece2"/>
<path d="M138 36 L135 10 L153 24 Z" fill="#d4a06c"/><path d="M140 31 L138 15 L149 24 Z" fill="#e6c4b8"/>
<path d="M178 28 L198 16 L191 39 Z" fill="#d4a06c"/><path d="M181 28 L195 19 L189 35 Z" fill="#e6c4b8"/>
<circle cx="151" cy="40" r="3" fill="#1c1412"/><circle cx="174" cy="46" r="3" fill="#1c1412"/>
<ellipse cx="158.5" cy="53" rx="3.4" ry="2.6" fill="#1c1412"/>
<path d="M148 58 C152 63 162 65 170 60" fill="none" stroke="#2a1a18" stroke-width="1.6"/>
<path d="M152 61 C151 68 154 72 158 72 C162 72 164 67 162 61 Z" fill="#e07a8a"/>
<path d="M32 80 C40 76 52 76 62 82 C70 92 72 110 66 122 C58 128 44 130 36 126 C32 116 30 96 32 80 Z" fill="#f4f2f0"/>
<path d="M33 104 C40 100 48 104 50 112 C52 122 46 128 38 128 C33 126 32 114 33 104 Z" fill="#1a1616"/>
<path d="M64 76 C70 74 76 78 76 86 C70 90 64 88 62 84 Z" fill="#1c1818"/>
<path d="M62 92 C70 86 82 88 90 96 C92 108 90 118 86 125 C78 127 70 126 64 120 C61 110 60 100 62 92 Z" fill="#f4f2f0"/>
<path d="M70 108 C74 106 78 108 78 112 C76 115 72 115 70 112 Z" fill="#2a2424"/>
<path d="M58 118 C64 114 72 116 76 124 C70 126 62 126 58 118 Z" fill="#8a6048"/>
<path d="M94 74 C100 72 108 74 110 80 C110 88 104 94 98 94 C94 90 92 82 94 74 Z" fill="#f2eeea"/>
<path d="M100 76 C106 74 112 78 112 86 C108 90 102 86 100 82 Z" fill="#221c1c"/>
<path d="M80 80 C86 76 94 80 98 90 C106 96 118 104 130 116 C132 124 126 128 116 127 C104 126 94 124 86 120 C82 108 80 94 80 80 Z" fill="#b8876a"/>
<path d="M78 80 C84 78 92 82 94 90 C88 94 82 92 78 88 Z" fill="#d0a090"/>
<path d="M106 92 C114 90 126 94 132 102 C133 108 128 110 120 108 C112 104 108 100 106 92 Z" fill="#5e4030"/>
<path d="M110 118 C118 120 126 124 130 124 L128 128 C120 128 112 126 110 118 Z" fill="#e8d8cc"/>
<path d="M24 120 C28 125 34 126 38 124 L34 129 C28 129 24 126 24 120 Z" fill="#4a3a30"/>
<path d="M134 124 C138 128 144 128 146 124 C144 130 138 132 134 130 Z" fill="#3a2c26"/>
</g>
</svg></div>
</div>
</div>
<!-- thumb2 -->
<div class="a" style="left:48px;top:420px;width:148px;height:111px;border:1px solid #d4d4d4;background:#fff;overflow:hidden">
  <div class="a" style="left:7px;top:12px;width:133px;height:90px;border:1px solid #88aaaa;border-top:none;border-radius:0 0 12px 12px"></div>
  <div class="a" style="left:0;top:3px;width:136px;height:19px;background:#6565c3;border-radius:0 10px 10px 0"></div>
  <div class="t" style="left:29px;top:8px;font-size:7.5px;color:#fff">Актуальність напрямку</div>
  <div class="t" style="left:12px;top:27px;font-size:5.6px;color:#222;line-height:9px"><span style="color:#a05050">•</span> отримання приплоду;<br><span style="color:#a05050">•</span> потреба часу;<br><span style="color:#a05050">•</span> проблеми під час природньої в’язки;</div>
  <div class="t" style="left:54px;top:54px;font-size:7.5px;color:#e02020">Що робити?</div>
  <svg class="a" style="left:28px;top:66px" width="92" height="34" viewBox="0 0 92 34">
<ellipse cx="12" cy="27" rx="7" ry="5" fill="#d8d0c8"/><ellipse cx="22" cy="22" rx="5" ry="9" fill="#3a3232"/><circle cx="22" cy="12" r="4" fill="#2a2424"/>
<ellipse cx="32" cy="26" rx="5" ry="6" fill="#8a7060"/><ellipse cx="42" cy="20" rx="8" ry="11" fill="#c89058"/><circle cx="42" cy="10" r="6" fill="#d8a060"/>
<ellipse cx="52" cy="24" rx="5" ry="8" fill="#5a4a40"/><ellipse cx="58" cy="18" rx="6" ry="12" fill="#b8a080"/><circle cx="58" cy="8" r="5" fill="#c8b090"/>
<ellipse cx="66" cy="24" rx="5" ry="8" fill="#2a2020"/><ellipse cx="74" cy="23" rx="5" ry="8" fill="#a87050"/><ellipse cx="82" cy="24" rx="5" ry="8" fill="#e8e4e0"/><circle cx="82" cy="16" r="4" fill="#c89060"/>
<ellipse cx="89" cy="26" rx="3" ry="6" fill="#3a3030"/><rect x="10" y="30" width="80" height="4" fill="#f0eeec"/>
</svg>
</div>
<!-- thumb3 -->
<div class="a" style="left:48px;top:546px;width:148px;height:112px;border:1px solid #d4d4d4;background:#fff;overflow:hidden">
  <div class="a" style="left:7px;top:12px;width:133px;height:89px;border:1px solid #88aaaa;border-top:none;border-radius:0 0 12px 12px"></div>
  <div class="a" style="left:-1px;top:3.5px;width:137px;height:19px;background:#6565c3;border-radius:0 10px 10px 0"></div>
  <div class="a" style="left:-1px;top:20.5px;width:126px;height:0.8px;background:#fff"></div>
  <div class="a" style="left:14px;top:30px;width:112px;font-size:6.2px;font-weight:bold;color:#222;line-height:7.9px;text-align:center">Впровадження біотехнології відтворення собак у повсякденну практику.</div>
  <div class="a" style="left:10px;top:44px;width:30px;height:21px;background:linear-gradient(90deg,#e8e0d4 0%,#f4eee6 35%,#9aa4ac 60%,#c8ccd0 100%)">
    <div class="a" style="left:5px;top:4px;width:13px;height:15px;background:#f2e8d8;border-radius:50% 50% 40% 40%"></div>
    <div class="a" style="left:10px;top:10px;width:2px;height:2px;background:#333;border-radius:50%"></div>
  </div>
  <div class="a" style="left:102px;top:44px;width:35px;height:25px;background:linear-gradient(180deg,#f0e0d0,#f4ece4)">
    <div class="a" style="left:9px;top:2px;width:17px;height:17px;background:#d0884a;border-radius:50%"></div>
    <div class="a" style="left:13px;top:10px;width:9px;height:8px;background:#e8c8a8;border-radius:50%"></div>
  </div>
  <div class="a" style="left:40px;top:52px;width:62px;height:11.5px;background:#a4c6f4;border:0.8px solid #7a9ad0;font-size:7px;color:#333;text-align:center;line-height:10px">Тварина</div>
  <div class="a" style="left:10px;top:78px;width:51px;height:18px;background:#a4c6f4;border:0.8px solid #7a9ad0;font-size:6px;color:#333;text-align:center;line-height:17px">Власник</div>
  <div class="a" style="left:73.5px;top:80px;width:61px;height:19px;background:#a4c6f4;border:0.8px solid #7a9ad0;font-size:4.6px;color:#444;text-align:center;line-height:7px;padding-top:2px">Лікар ветеринарної медицини</div>
  <svg class="a" style="left:0;top:0" width="148" height="112"><path d="M61 63.5 L37 80 M83 65 L110 82.5 M62 84.5 L73 84.5" stroke="#222" stroke-width=".7"/></svg>
</div>
<!-- thumb4 -->
<div class="a" style="left:48px;top:673px;width:148px;height:111px;border:1px solid #d4d4d4;background:#fff;overflow:hidden">
  <div class="a" style="left:8px;top:12px;width:132px;height:89px;border:1px solid #88aaaa;border-top:none;border-radius:0 0 12px 12px"></div>
  <div class="a" style="left:-1px;top:4px;width:138px;height:18.5px;background:#6565c3;border-radius:0 10px 10px 0"></div>
  <div class="a" style="left:11px;top:4px;width:118px;height:43px;background:linear-gradient(180deg,#6a9a48 0%,#78a850 50%,#5a8a3a 100%)"></div>
  <svg class="a" style="left:11px;top:4px" width="118" height="43" viewBox="0 0 118 43">
    <g>
    <ellipse cx="25" cy="20" rx="9" ry="14" fill="#d8a878"/><ellipse cx="25" cy="24" rx="5" ry="7" fill="#f0e4d8"/><ellipse cx="25" cy="11" rx="7" ry="6" fill="#e0b080"/><ellipse cx="25" cy="13" rx="3.5" ry="3" fill="#f2e8e0"/>
    <ellipse cx="38" cy="22" rx="7" ry="10" fill="#c88858"/><ellipse cx="38" cy="17" rx="6" ry="5.5" fill="#c08050"/><ellipse cx="38" cy="19" rx="3" ry="2.5" fill="#e8d0c0"/>
    <ellipse cx="50" cy="22" rx="9" ry="11" fill="#d08850"/><ellipse cx="50" cy="15" rx="7" ry="6" fill="#d89058"/><ellipse cx="50" cy="17.5" rx="3.5" ry="3" fill="#e8d4c8"/>
    <ellipse cx="70" cy="21" rx="10" ry="11" fill="#e0b890"/><ellipse cx="70" cy="14" rx="7" ry="6.5" fill="#e8c098"/><ellipse cx="71" cy="17" rx="3.5" ry="3" fill="#f4ece4"/>
    <ellipse cx="92" cy="21" rx="12" ry="10" fill="#d89058"/><ellipse cx="90" cy="15" rx="7" ry="6.5" fill="#d89860"/><ellipse cx="90" cy="18" rx="3.5" ry="3" fill="#ecd8c8"/>
    </g>
  </svg>
  <div class="a" style="left:29px;top:29px;width:92.5px;height:16px;background:#a4c6f4;border:0.8px solid #7a9ad0;font-size:5.6px;color:#333;text-align:center;line-height:6.6px;padding-top:1.2px">Ключова роль лікаря ветеринарної медицини</div>
  <div class="a" style="left:12.5px;top:53px;width:52.5px;height:13px;background:#a4c6f4;border:0.8px solid #7a9ad0;font-size:3.5px;color:#444;text-align:center;line-height:12px">Оцінка якості сперми</div>
  <div class="a" style="left:77px;top:53px;width:54.5px;height:14.5px;background:#a4c6f4;border:0.8px solid #7a9ad0;font-size:3.5px;color:#444;text-align:center;line-height:13px">Оптимальний час осіменіння</div>
  <div class="a" style="left:36.5px;top:75px;width:75px;height:16.5px;background:#a4c6f4;border:0.8px solid #7a9ad0;font-size:3.5px;color:#444;text-align:center;line-height:15px">Техніка осіменіння</div>
  <svg class="a" style="left:0;top:0" width="148" height="111"><path d="M71.3 45 V75 M62.4 45.7 L50.8 51.8 M81.6 45.7 L90.5 52.5" stroke="#222" stroke-width=".7"/></svg>
</div>
<!-- thumb5 -->
<div class="a" style="left:48px;top:799px;width:148px;height:21px;border:1px solid #d4d4d4;border-bottom:none;background:#fff;overflow:hidden">
  <div class="a" style="left:0;top:3px;width:136px;height:18px;background:#6565c3;border-radius:0 10px 10px 0"></div>
  <div class="a" style="left:20.5px;top:4.5px;width:100px;height:16px;background:#a4c6f4;font-size:5.6px;color:#444;text-align:center;line-height:7px;padding-top:1px">Показання до штучного<br>осіменіння</div>
  <div class="a" style="left:82px;top:17px;border-left:3px solid transparent;border-right:3px solid transparent;border-bottom:3px solid #222"></div>
</div>
<!-- MAIN SLIDE -->
<div id="slide" class="a" style="left:435px;top:286px;width:656px;height:492px;background:#fff;box-shadow:0 0 0 1px #d8d8d8;overflow:hidden">
  <div class="a" style="left:16px;top:65px;width:517px;height:60px;border:3px solid #6f9a99;border-bottom:none"></div>
  <div class="a" style="left:50px;top:220px;width:532px;height:170px;border:3px solid #6f9a99;border-top:none;border-bottom-left-radius:42px"></div>
  <div class="a" style="left:0;top:100px;width:645px;height:131px;background:#6565c3;border-radius:0 62px 62px 0 / 0 66px 66px 0"></div>
  <div class="a" style="left:0;top:219px;width:596px;height:3px;background:#fff"></div>
  <div class="t" style="left:23px;top:112px;font-size:42.2px;line-height:49.3px;color:#fff">Особливості концепції<br>біотехнології відтворення собак</div>
  <div class="t" style="left:84px;top:249px;font-size:22px;line-height:31.1px;color:#000">Кандидат ветеринарних наук, доцент<br>ДЕРКАЧ СЕРГІЙ СТЕПАНОВИЧ</div>
  <div class="t" style="left:266px;top:442px;font-size:22.2px;color:#000">Київ 2025</div>
  <div id="pup" class="a" style="left:411px;top:317px;width:218px;height:146px;background:#e4e2e0;overflow:hidden"><svg width="218" height="146" viewBox="0 0 218 146">
<defs><filter id="bl" x="-5%" y="-5%" width="110%" height="110%"><feGaussianBlur stdDeviation="0.9"/></filter>
<linearGradient id="blk" x1="0" y1="0" x2="1" y2="1"><stop offset="0" stop-color="#e6e2dc"/><stop offset=".5" stop-color="#eeebe6"/><stop offset="1" stop-color="#ebe7e1"/></linearGradient>
<linearGradient id="fur" x1="0" y1="0" x2="1" y2="1"><stop offset="0" stop-color="#d6a46e"/><stop offset=".5" stop-color="#d8a672"/><stop offset="1" stop-color="#cc9460"/></linearGradient>
</defs>
<g filter="url(#bl)">
<rect width="218" height="146" fill="#dcdad9"/>
<path d="M0 45 C12 44 28 47 36 52 C50 48 80 35 100 25 C120 12 140 4 160 2 C185 0 200 8 205 17 L218 20 L218 146 L0 146 Z" fill="url(#blk)"/>
<path d="M0 46 C15 45 30 48 38 54 L24 100 C15 104 5 105 0 104 Z" fill="#e2ded8"/>
<path d="M0 104 C20 100 40 110 60 122 L40 146 L0 146 Z" fill="#e8e4de"/>
<path d="M17 97 C18 82 22 70 30 62 C38 55 50 51 61 50 C75 47 87 43 100 42 C115 41 128 45 140 49 L150 80 C140 84 132 90 126 96 L100 90 C85 78 75 72 66 74 C50 78 40 86 34 100 L30 122 C26 124 22 120 22 112 C20 106 18 102 17 97 Z" fill="url(#fur)"/>
<path d="M60 74 C72 68 90 70 104 78 L100 90 C88 84 74 78 60 80 Z" fill="#e4c2a6"/>
<path d="M22 84 C24 96 26 110 28 122 L33 122 C31 108 30 96 30 86 Z" fill="#c08a58"/>
<path d="M126 70 C132 86 138 104 142 120 C143 126 140 129 136 128 C132 114 126 100 120 86 Z" fill="#d6a470"/>
<path d="M138 84 C148 82 160 82 170 86 C172 92 165 96 150 97 C144 96 140 92 138 84 Z" fill="#dcae7a"/>
<path d="M135 61 C140 72 150 86 148 92 C140 92 132 82 128 70 Z" fill="#f2ebe2"/>
<path d="M136 42 C137 33 146 27 160 27 C176 27 187 33 188 44 C188 58 180 70 168 74 C156 76 145 72 140 64 C136 58 135 50 136 42 Z" fill="#dba876"/>
<path d="M143 44 C146 54 150 64 156 72 C164 74 174 70 180 60 C176 52 170 46 162 43 C156 45 150 46 143 44 Z" fill="#f4ece2"/>
<path d="M138 36 L135 10 L153 24 Z" fill="#d4a06c"/><path d="M140 31 L138 15 L149 24 Z" fill="#e6c4b8"/>
<path d="M178 28 L198 16 L191 39 Z" fill="#d4a06c"/><path d="M181 28 L195 19 L189 35 Z" fill="#e6c4b8"/>
<circle cx="151" cy="40" r="3" fill="#1c1412"/><circle cx="174" cy="46" r="3" fill="#1c1412"/>
<ellipse cx="158.5" cy="53" rx="3.4" ry="2.6" fill="#1c1412"/>
<path d="M148 58 C152 63 162 65 170 60" fill="none" stroke="#2a1a18" stroke-width="1.6"/>
<path d="M152 61 C151 68 154 72 158 72 C162 72 164 67 162 61 Z" fill="#e07a8a"/>
<path d="M32 80 C40 76 52 76 62 82 C70 92 72 110 66 122 C58 128 44 130 36 126 C32 116 30 96 32 80 Z" fill="#f4f2f0"/>
<path d="M33 104 C40 100 48 104 50 112 C52 122 46 128 38 128 C33 126 32 114 33 104 Z" fill="#1a1616"/>
<path d="M64 76 C70 74 76 78 76 86 C70 90 64 88 62 84 Z" fill="#1c1818"/>
<path d="M62 92 C70 86 82 88 90 96 C92 108 90 118 86 125 C78 127 70 126 64 120 C61 110 60 100 62 92 Z" fill="#f4f2f0"/>
<path d="M70 108 C74 106 78 108 78 112 C76 115 72 115 70 112 Z" fill="#2a2424"/>
<path d="M58 118 C64 114 72 116 76 124 C70 126 62 126 58 118 Z" fill="#8a6048"/>
<path d="M94 74 C100 72 108 74 110 80 C110 88 104 94 98 94 C94 90 92 82 94 74 Z" fill="#f2eeea"/>
<path d="M100 76 C106 74 112 78 112 86 C108 90 102 86 100 82 Z" fill="#221c1c"/>
<path d="M80 80 C86 76 94 80 98 90 C106 96 118 104 130 116 C132 124 126 128 116 127 C104 126 94 124 86 120 C82 108 80 94 80 80 Z" fill="#b8876a"/>
<path d="M78 80 C84 78 92 82 94 90 C88 94 82 92 78 88 Z" fill="#d0a090"/>
<path d="M106 92 C114 90 126 94 132 102 C133 108 128 110 120 108 C112 104 108 100 106 92 Z" fill="#5e4030"/>
<path d="M110 118 C118 120 126 124 130 124 L128 128 C120 128 112 126 110 118 Z" fill="#e8d8cc"/>
<path d="M24 120 C28 125 34 126 38 124 L34 129 C28 129 24 126 24 120 Z" fill="#4a3a30"/>
<path d="M134 124 C138 128 144 128 146 124 C144 130 138 132 134 130 Z" fill="#3a2c26"/>
</g>
</svg></div>
</div>
<!-- right scrollbar -->
<div class="a" style="left:1297px;top:280px;width:13px;height:461px;background:#dcdbdd"></div>
<div class="a" style="left:1297px;top:280px;width:13px;height:12px;background:#fff;border:1px solid #d0d0d0"></div>
<div class="a" style="left:1300px;top:284px;border-left:3.5px solid transparent;border-right:3.5px solid transparent;border-bottom:3.5px solid #666"></div>
<div class="a" style="left:1297px;top:292px;width:13px;height:15px;background:#fff;border:1px solid #c8c8c8"></div>
<div class="a" style="left:1297px;top:729px;width:13px;height:12px;background:#fff;border:1px solid #d0d0d0"></div>
<div class="a" style="left:1300px;top:734px;border-left:3.5px solid transparent;border-right:3.5px solid transparent;border-top:3.5px solid #666"></div>
<svg class="a" style="left:1299px;top:744px" width="9" height="26" viewBox="0 0 9 26"><path d="M1 5 L4.5 1.5 L8 5 Z M1 9 L4.5 5.5 L8 9 Z M0.5 10.5 H8.5" fill="#777" stroke="#777" stroke-width=".6"/><path d="M0.5 15 H8.5 M1 17 L4.5 20.5 L8 17 Z M1 21 L4.5 24.5 L8 21 Z" fill="#777" stroke="#777" stroke-width=".6"/></svg>
<!-- cursor -->
<svg class="a" style="left:1177px;top:748px" width="12" height="16" viewBox="0 0 12 16"><path d="M1 1 V13 L4 10 L6.5 15 L8.5 14 L6 9 H10 Z" fill="#fff" stroke="#444" stroke-width="1"/></svg>
<!-- notes -->
<div class="a" style="left:228px;top:786px;width:1083px;height:1px;background:#c8c8c8"></div>
<div class="t" style="left:238px;top:795.5px;font-size:11.8px;color:#555">Нотатки до слайда</div>
<!-- status bar -->
<div class="a" style="left:26px;top:820px;width:1285px;height:18px;background:#f1f0f2;border-top:1px solid #cbcbcd"></div>
<div class="t" style="left:31px;top:824.5px;font-size:8.4px;color:#777">Слайд 1 з 70</div>
<svg class="a" style="left:93px;top:822px" width="14" height="12" viewBox="0 0 14 12"><path d="M1 1 H7 V11 H1 Z" fill="none" stroke="#777"/><path d="M8 3 L12 8 M12 3 L8 8" stroke="#777"/></svg>
<div class="t" style="left:117px;top:824px;font-size:9px;color:#555">українська</div>
<svg class="a" style="left:920px;top:823px" width="12" height="11" viewBox="0 0 12 11"><path d="M5 1 L7 3 M5 1 L3 3 M1 5 H11 M1 7.5 H11 M1 10 H11" stroke="#666" fill="none"/></svg>
<div class="t" style="left:934px;top:824px;font-size:9.3px;color:#555">Нотатки</div>
<svg class="a" style="left:980px;top:822px" width="13" height="12" viewBox="0 0 13 12"><path d="M1 1 H12 V8 H6 L3 11 V8 H1 Z" fill="#777"/></svg>
<div class="t" style="left:993px;top:824px;font-size:9.3px;color:#555">Примітки</div>
<div class="a" style="left:1043px;top:821px;width:27px;height:17px;background:#d6d6d6"></div>
<svg class="a" style="left:1050px;top:824px" width="12" height="11" viewBox="0 0 12 11"><rect x="0.5" y="0.5" width="11" height="10" fill="none" stroke="#777"/><path d="M3.5 0.5 V10.5 M5.5 3 H10 M5.5 5.5 H10 M5.5 8 H10" stroke="#777"/></svg>
<svg class="a" style="left:1077px;top:823px" width="12" height="11" viewBox="0 0 12 11"><rect x="0.5" y="0.5" width="4.5" height="4" fill="none" stroke="#777"/><rect x="7" y="0.5" width="4.5" height="4" fill="none" stroke="#777"/><rect x="0.5" y="6.5" width="4.5" height="4" fill="none" stroke="#777"/><rect x="7" y="6.5" width="4.5" height="4" fill="none" stroke="#777"/></svg>
<svg class="a" style="left:1105px;top:823px" width="11" height="11" viewBox="0 0 11 11"><path d="M5.5 1 V10 M0.5 1 H10.5 V10 H0.5 Z M2 3.5 H4 M2 6 H4 M7 3.5 H9 M7 6 H9" stroke="#777" fill="none"/></svg>
<svg class="a" style="left:1132px;top:823px" width="11" height="11" viewBox="0 0 11 11"><path d="M0.5 1 H10.5 M1.5 1 V6 H9.5 V1 M5.5 6 V9 M3 10 H8" stroke="#777" fill="none"/></svg>
<div class="a" style="left:1155px;top:828px;width:7px;height:1px;background:#555"></div>
<div class="a" style="left:1166px;top:828px;width:81px;height:1px;background:#bbb"></div>
<div class="a" style="left:1206px;top:826px;width:1px;height:5px;background:#bbb"></div>
<div class="a" style="left:1196px;top:824px;width:3px;height:10px;background:#666"></div>
<div class="a" style="left:1251px;top:828px;width:8px;height:1px;background:#555"></div>
<div class="a" style="left:1254.5px;top:824.5px;width:1px;height:8px;background:#555"></div>
<div class="t" style="left:1269px;top:824px;font-size:9px;color:#777">82%</div>
<svg class="a" style="left:1295px;top:823px" width="12" height="12" viewBox="0 0 12 12"><rect x="0.5" y="0.5" width="11" height="11" fill="none" stroke="#777"/><path d="M2 2 L4.5 4.5 M10 2 L7.5 4.5 M2 10 L4.5 7.5 M10 10 L7.5 7.5" stroke="#777"/></svg>

<div class="a" style="left:1310px;top:278px;width:1px;height:542px;background:#efeef0"></div>
<div class="a" style="left:1311px;top:278px;width:1px;height:560px;background:#030405"></div>
<div class="a" style="left:25px;top:278px;width:1px;height:560px;background:#030405"></div>
<div class="a" style="left:26px;top:278px;width:1px;height:542px;background:#f1f1f3"></div>
</body></html>
